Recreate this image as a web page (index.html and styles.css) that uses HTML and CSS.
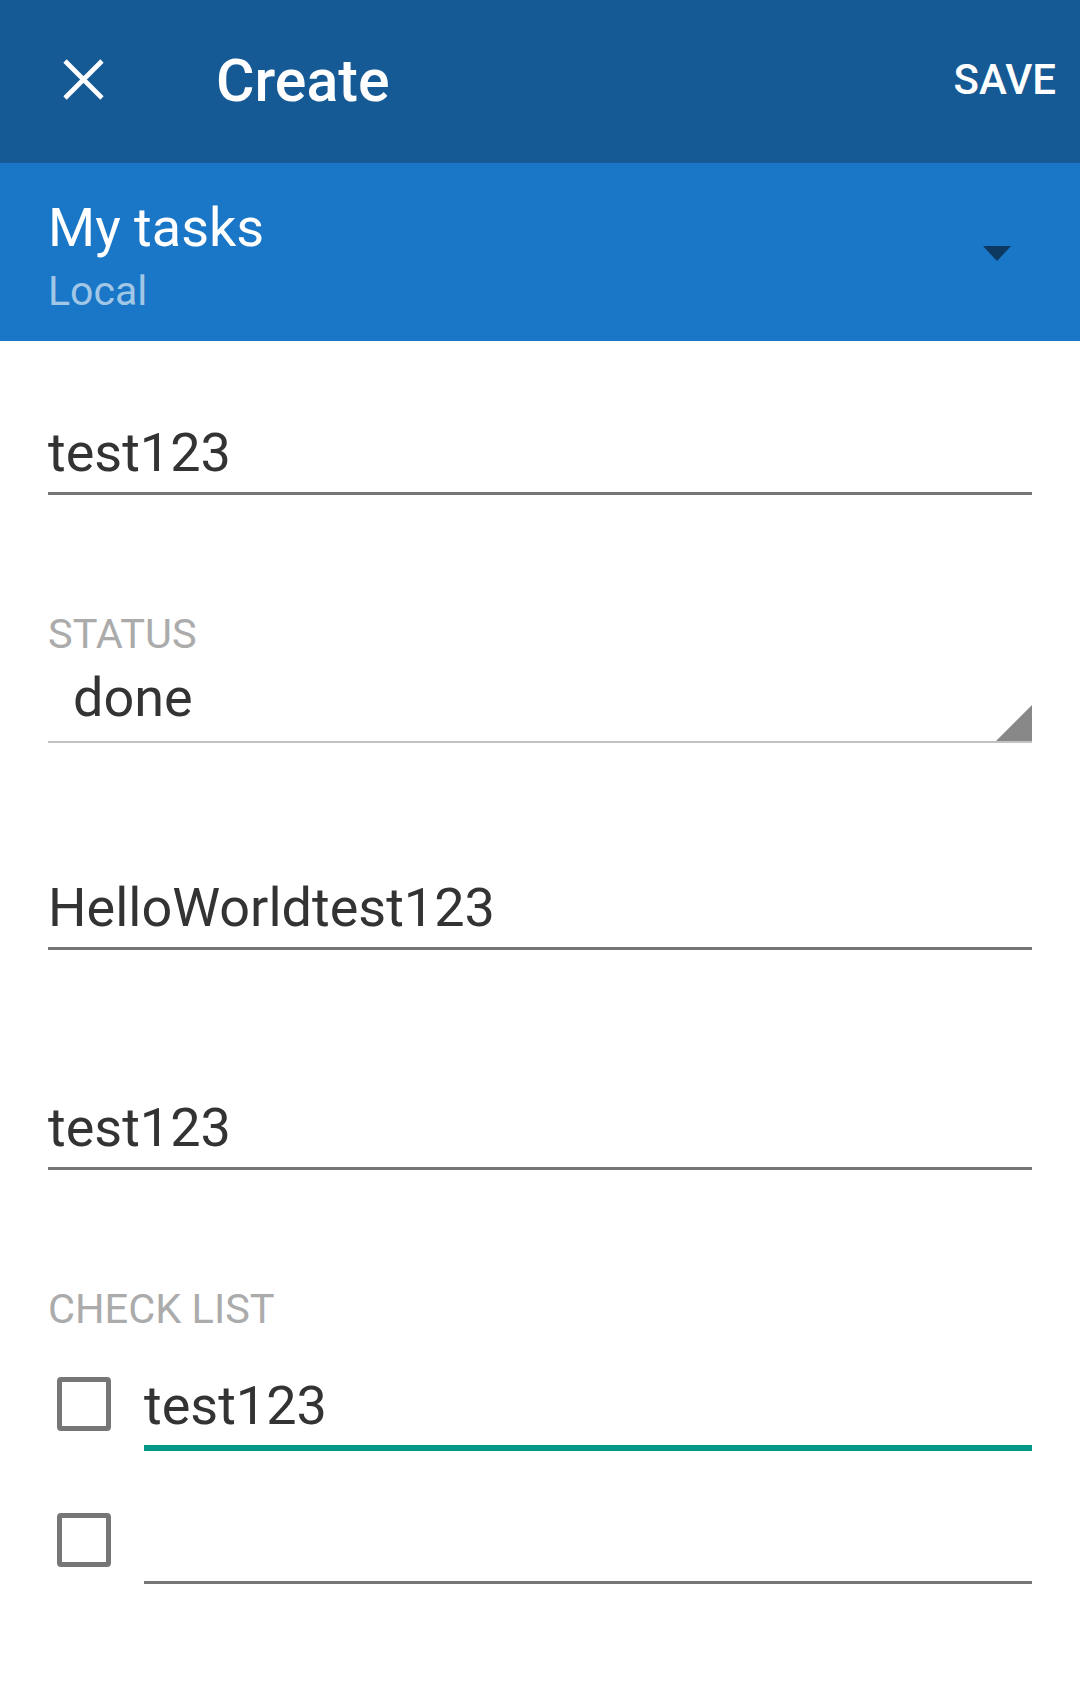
FILE: index.html
```html
<!DOCTYPE html>
<html>
<head>
<meta charset="utf-8">
<title>Create</title>
<link rel="stylesheet" href="styles.css">
</head>
<body>
<header class="toolbar">
  <div class="nav-icon">
    <svg width="41" height="41" viewBox="0 0 41 41"><path d="M2 2 L39 39 M39 2 L2 39" stroke="#fff" stroke-width="4.6" fill="none"/></svg>
  </div>
  <div class="title">Create</div>
  <div class="action">SAVE</div>
</header>
<section class="account">
  <div class="account-text">
    <div class="account-name">My tasks</div>
    <div class="account-type">Local</div>
  </div>
  <div class="account-caret"></div>
</section>
<main class="form">
  <div class="field field-first"><div class="field-text">test123</div></div>
  <div class="label label-status">STATUS</div>
  <div class="spinner">
    <div class="spinner-text">done</div>
    <div class="spinner-arrow"></div>
  </div>
  <div class="field field-third"><div class="field-text">HelloWorldtest123</div></div>
  <div class="field field-fourth"><div class="field-text">test123</div></div>
  <div class="label label-check">CHECK LIST</div>
  <div class="check-row check-row-first">
    <div class="checkbox"></div>
    <div class="field check-field focused"><div class="field-text">test123</div></div>
  </div>
  <div class="check-row check-row-second">
    <div class="checkbox"></div>
    <div class="field check-field"><div class="field-text">&nbsp;</div></div>
  </div>
</main>
</body>
</html>
```
FILE: styles.css
```css
* { box-sizing: border-box; }
html, body { margin: 0; padding: 0; background: #ffffff; }
body { width: 1080px; height: 1699px; font-family: Roboto, "Noto Sans", sans-serif; overflow: hidden; }

.toolbar {
  height: 163px;
  background: #155995;
  display: flex;
  align-items: center;
  color: #ffffff;
}
.nav-icon { width: 41px; height: 41px; margin-left: 63px; margin-top: -4px; }
.nav-icon svg { display: block; }
.title {
  margin-left: 112px;
  font-size: 59px;
  font-weight: 500;
  line-height: 64px;
  margin-top: -2px;
}
.action {
  margin-left: auto;
  margin-right: 24px;
  font-size: 42px;
  font-weight: 500;
  line-height: 48px;
  margin-top: -4px;
}

.account {
  height: 178px;
  background: #1a76c6;
  display: flex;
  align-items: center;
  padding: 0 69px 0 48px;
}
.account-text { flex: 1; padding-top: 35px; padding-bottom: 17px; align-self: stretch; }
.account-name { font-size: 54px; line-height: 60px; color: #ffffff; }
.account-type { font-size: 41px; line-height: 66px; color: rgba(255,255,255,0.6); }
.account-caret {
  width: 0; height: 0;
  border-left: 14.5px solid transparent;
  border-right: 14.5px solid transparent;
  border-top: 15px solid #0d3860;
  margin-top: 3px;
}

.form { padding: 0 48px; }
.field { border-bottom: 3px solid #767676; }
.field-text {
  font-size: 54px;
  line-height: 64px;
  color: #333333;
  padding-bottom: 7px;
  white-space: nowrap;
}
.field-first { margin-top: 80px; }
.label { font-size: 41.5px; line-height: 48px; color: #ababab; }
.label-status { margin-top: 115px; }
.spinner {
  margin-top: 8px;
  display: flex;
  align-items: flex-end;
  border-bottom: 2px solid #c2c2c2;
}
.spinner-text {
  flex: 1;
  font-size: 54px;
  line-height: 64px;
  color: #333333;
  padding-left: 25px;
  padding-bottom: 11px;
}
.spinner-arrow {
  width: 0; height: 0;
  border-left: 36px solid transparent;
  border-bottom: 36px solid #888888;
}
.field-third { margin-top: 133px; }
.field-fourth { margin-top: 146px; }
.label-check { margin-top: 115px; }

.check-row { display: flex; align-items: flex-start; }
.check-row-first { margin-top: 41px; }
.check-row-second { margin-top: 59px; }
.checkbox {
  width: 54px; height: 54px;
  margin-left: 9px;
  margin-top: 3px;
  border: 5px solid #767676;
  border-radius: 4px;
  flex: none;
}
.check-field { flex: 1; margin-left: 33px; }
.check-field.focused { border-bottom: 6px solid #009688; }
```
